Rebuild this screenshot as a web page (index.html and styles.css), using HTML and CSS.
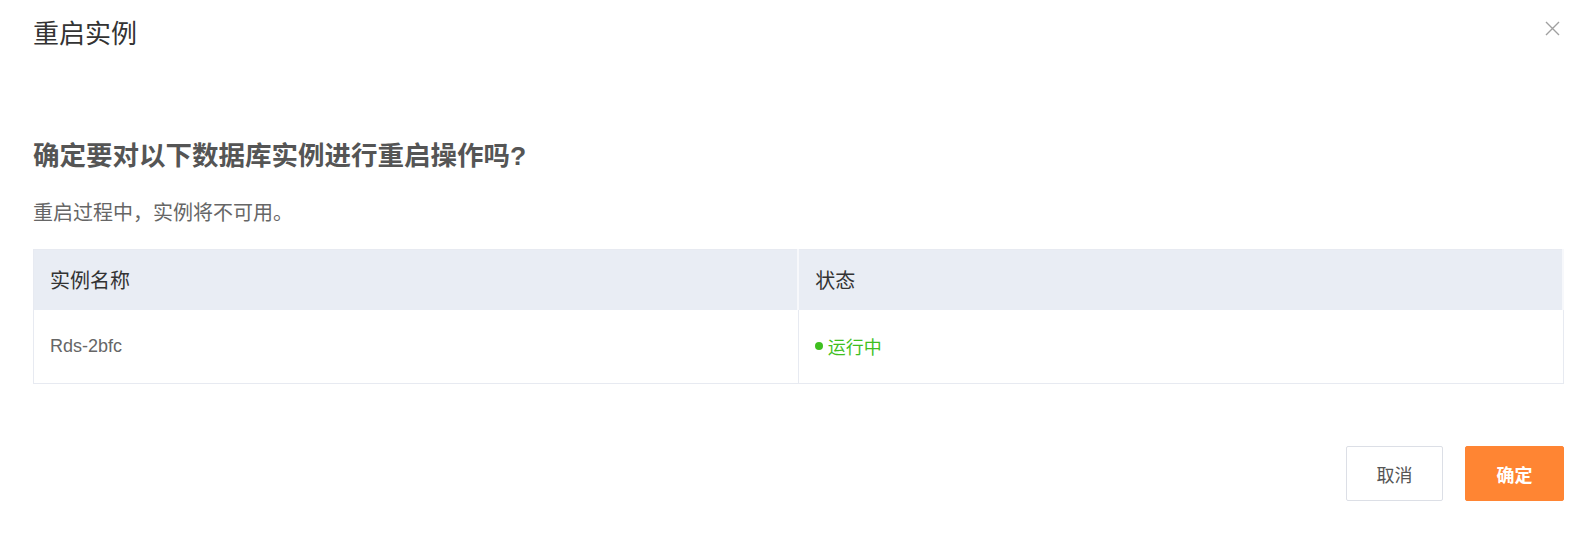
FILE: index.html
```html
<!DOCTYPE html>
<html lang="zh-CN">
<head>
  <meta charset="UTF-8">
  <meta name="viewport" content="width=device-width, initial-scale=1.0">
  <title>重启实例</title>
  <link rel="stylesheet" href="styles.css">
</head>
<body>
  <div class="dialog">
    <div class="dialog-header">
      <h2 class="dialog-title">重启实例</h2>
      <span class="close">
        <svg width="15" height="15" viewBox="0 0 15 15"><path d="M1 1L14 14M14 1L1 14" stroke="#a0a0a0" stroke-width="1.4" fill="none"/></svg>
      </span>
    </div>

    <div class="dialog-body">
      <h3 class="question">确定要对以下数据库实例进行重启操作吗?</h3>
      <p class="tip">重启过程中，实例将不可用。</p>

      <table class="list">
        <tr>
          <th>实例名称</th>
          <th>状态</th>
        </tr>
        <tr>
          <td class="name">Rds-2bfc</td>
          <td><span class="status"><i class="dot"></i>运行中</span></td>
        </tr>
      </table>
    </div>

    <div class="dialog-footer">
      <button class="btn">取消</button>
      <button class="btn primary">确定</button>
    </div>
  </div>
</body>
</html>
```

FILE: styles.css
```css
*{
  margin: 0;
  padding: 0;
  box-sizing: border-box;
}
body{
  background: #fff;
  font-family: "Liberation Sans", "Noto Sans CJK SC", sans-serif;
  color: #333;
}
.dialog{
  padding: 16px 15px 0 33px;
}
.dialog-header{
  display: flex;
  justify-content: space-between;
  align-items: flex-start;
}
.dialog-title{
  font-size: 26px;
  line-height: 36px;
  font-weight: normal;
  color: #333;
}
.close{
  margin-top: 5px;
  margin-right: 4px;
  display: block;
  line-height: 0;
}

.question{
  margin-top: 86px;
  font-size: 26.5px;
  line-height: 36px;
  font-weight: bold;
  color: #555;
}
.tip{
  margin-top: 25px;
  font-size: 20px;
  line-height: 28px;
  color: #666;
}

.list{
  margin-top: 22px;
  width: 100%;
  border-collapse: collapse;
  table-layout: fixed;
  border: 1px solid #e7eaf1;
}
.list th{
  height: 60px;
  background: #e9edf4;
  text-align: left;
  font-weight: normal;
  font-size: 20px;
  color: #333;
  padding: 0 16px;
  border-right: 2px solid #f7f8fb;
}
.list td{
  height: 74px;
  padding: 0 16px;
  font-size: 18px;
  border-right: 1px solid #e7eaf1;
}
.list .name{
  color: #666;
}
.status{
  color: #3fbf1f;
  display: inline-flex;
  align-items: center;
}
.dot{
  width: 8px;
  height: 8px;
  border-radius: 50%;
  background: #3fbf1f;
  margin-right: 5px;
}

.dialog-footer{
  display: flex;
  justify-content: flex-end;
  gap: 22px;
  margin-top: 62px;
}
.btn{
  width: 97px;
  height: 55px;
  border: 1px solid #dcdfe6;
  border-radius: 2px;
  background: #fff;
  color: #555;
  font-family: "Liberation Sans", "Noto Sans CJK SC", sans-serif;
  font-size: 18px;
}
.btn.primary{
  width: 99px;
  background: #ff8533;
  border-color: #ff8533;
  color: #fff;
  font-weight: bold;
}
```
